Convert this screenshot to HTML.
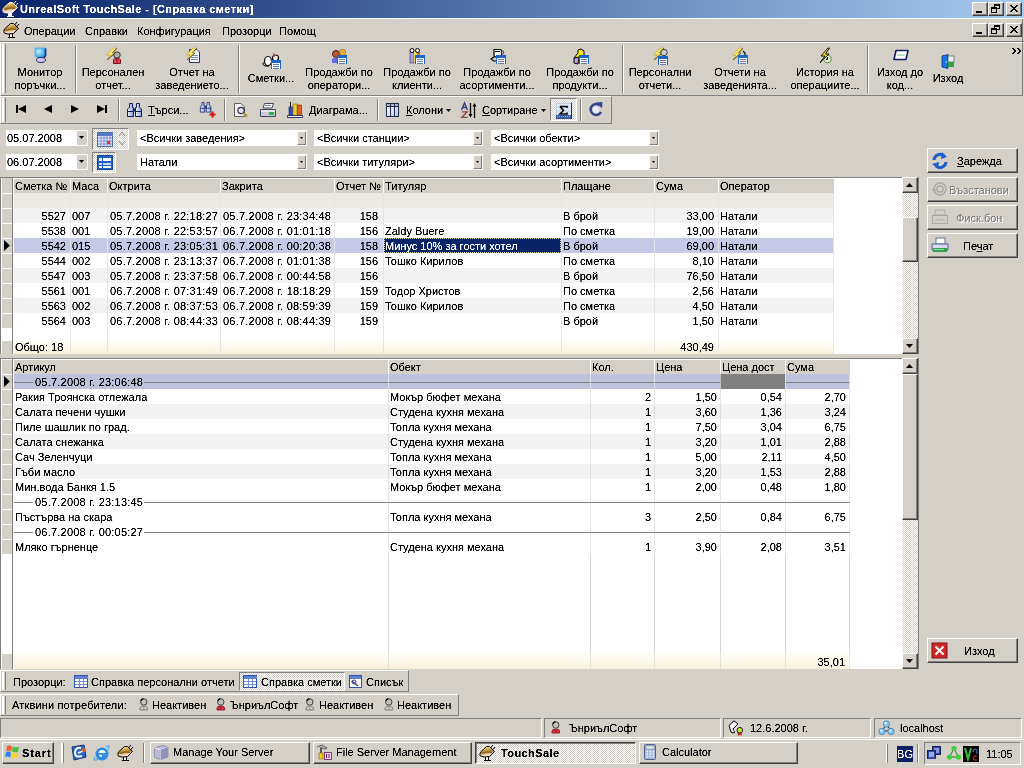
<!DOCTYPE html>
<html><head><meta charset="utf-8">
<style>
*{margin:0;padding:0;box-sizing:border-box}
html,body{width:1024px;height:768px;overflow:hidden;background:#D4D0C8;font-family:"Liberation Sans",sans-serif;font-size:11px;color:#000;position:relative}
.a{position:absolute}
svg.a{overflow:visible}
.t{position:absolute;white-space:nowrap;line-height:13px;filter:url(#cr)}

</style></head><body>
<svg width="0" height="0" style="position:absolute"><filter id="cr" color-interpolation-filters="sRGB"><feComponentTransfer><feFuncA type="linear" slope="2" intercept="-0.3"/></feComponentTransfer></filter></svg>
<div class="a" style="left:0px;top:0px;width:1024px;height:18px;background:linear-gradient(to right,#0A246A,#A6CAF0)"></div>
<svg class="a" style="left:2px;top:1px" width="17" height="17" viewBox="0 0 17 17"><defs><linearGradient id="ag1" x1="0" y1="0" x2="0.25" y2="1"><stop offset="0" stop-color="#FFF8C8"/><stop offset="0.35" stop-color="#D8B050"/><stop offset="0.6" stop-color="#A07828"/><stop offset="0.8" stop-color="#F0C8A0"/><stop offset="1" stop-color="#FFF0F0"/></linearGradient></defs><path d="M6 11.5 H10 V15 H6 Z" fill="#FFF4F0"/><path d="M1.5 7 L7.5 1.5 L10.5 1.5 L15.5 6.5 L10.5 11.5 L5 12 Q0 11.5 0.8 9.5 Z" fill="url(#ag1)" stroke="#F0F0F0" stroke-width="1"/><path d="M3 8.5 Q8 6 13 7.5" stroke="#806018" stroke-width="1" fill="none"/><path d="M11.5 3 L14 0 M13.5 5 L16 2" stroke="#F0F0F0" stroke-width="1"/><path d="M6.5 12 V15 M9.5 12 V15 M5 15.5 H12" stroke="#F0F0F0" stroke-width="1"/></svg>
<div class="t" style="left:20px;top:3px;color:#fff;font-weight:bold;font-size:11px;letter-spacing:0.42px">UnrealSoft TouchSale - [Справка сметки]</div>
<div class="a" style="left:972px;top:2px;width:16px;height:14px;background:#D4D0C8;border-top:1px solid #fff;border-left:1px solid #fff;border-right:1px solid #404040;border-bottom:1px solid #404040;box-shadow:inset -1px -1px 0 #808080"></div>
<div class="a" style="left:988px;top:2px;width:16px;height:14px;background:#D4D0C8;border-top:1px solid #fff;border-left:1px solid #fff;border-right:1px solid #404040;border-bottom:1px solid #404040;box-shadow:inset -1px -1px 0 #808080"></div>
<div class="a" style="left:1006px;top:2px;width:16px;height:14px;background:#D4D0C8;border-top:1px solid #fff;border-left:1px solid #fff;border-right:1px solid #404040;border-bottom:1px solid #404040;box-shadow:inset -1px -1px 0 #808080"></div>
<div class="a" style="left:976px;top:11px;width:6px;height:2px;background:#000"></div>
<svg class="a" style="left:988px;top:2px" width="16" height="14"><rect x="6.5" y="2.5" width="5" height="4" fill="none" stroke="#000"/><rect x="6" y="2" width="6" height="2" fill="#000"/><rect x="3.5" y="5.5" width="5" height="5" fill="#D4D0C8" stroke="#000"/><rect x="3" y="5" width="6" height="2" fill="#000"/></svg>
<svg class="a" style="left:1006px;top:2px" width="16" height="14" shape-rendering="crispEdges"><path d="M4 3h2v1h-2zM10 3h2v1h-2zM5 4h2v1h-2zM9 4h2v1h-2zM6 5h4v1h-4zM7 6h2v1h-2zM6 7h4v1h-4zM5 8h2v1h-2zM9 8h2v1h-2zM4 9h2v1h-2zM10 9h2v1h-2z" fill="#000"/></svg>
<div class="a" style="left:0px;top:18px;width:1024px;height:1px;background:#fff"></div>
<svg class="a" style="left:3px;top:22px" width="17" height="17" viewBox="0 0 17 17"><defs><linearGradient id="ag2" x1="0" y1="0" x2="0.25" y2="1"><stop offset="0" stop-color="#FFF8C8"/><stop offset="0.35" stop-color="#D8B050"/><stop offset="0.6" stop-color="#A07828"/><stop offset="0.8" stop-color="#F0C8A0"/><stop offset="1" stop-color="#FFF0F0"/></linearGradient></defs><path d="M6 11.5 H10 V15 H6 Z" fill="#FFF4F0"/><path d="M1.5 7 L7.5 1.5 L10.5 1.5 L15.5 6.5 L10.5 11.5 L5 12 Q0 11.5 0.8 9.5 Z" fill="url(#ag2)" stroke="#000" stroke-width="1"/><path d="M3 8.5 Q8 6 13 7.5" stroke="#806018" stroke-width="1" fill="none"/><path d="M11.5 3 L14 0 M13.5 5 L16 2" stroke="#000" stroke-width="1"/><path d="M6.5 12 V15 M9.5 12 V15 M5 15.5 H12" stroke="#000" stroke-width="1"/></svg>
<div class="t" style="left:24px;top:25px;">Операции</div>
<div class="t" style="left:85px;top:25px;">Справки</div>
<div class="t" style="left:137px;top:25px;">Конфигурация</div>
<div class="t" style="left:222px;top:25px;">Прозорци</div>
<div class="t" style="left:279px;top:25px;">Помощ</div>
<div class="a" style="left:972px;top:23px;width:16px;height:14px;background:#D4D0C8;border-top:1px solid #fff;border-left:1px solid #fff;border-right:1px solid #404040;border-bottom:1px solid #404040;box-shadow:inset -1px -1px 0 #808080"></div>
<div class="a" style="left:988px;top:23px;width:16px;height:14px;background:#D4D0C8;border-top:1px solid #fff;border-left:1px solid #fff;border-right:1px solid #404040;border-bottom:1px solid #404040;box-shadow:inset -1px -1px 0 #808080"></div>
<div class="a" style="left:1006px;top:23px;width:16px;height:14px;background:#D4D0C8;border-top:1px solid #fff;border-left:1px solid #fff;border-right:1px solid #404040;border-bottom:1px solid #404040;box-shadow:inset -1px -1px 0 #808080"></div>
<div class="a" style="left:976px;top:32px;width:6px;height:2px;background:#000"></div>
<svg class="a" style="left:988px;top:23px" width="16" height="14"><rect x="6.5" y="2.5" width="5" height="4" fill="none" stroke="#000"/><rect x="6" y="2" width="6" height="2" fill="#000"/><rect x="3.5" y="5.5" width="5" height="5" fill="#D4D0C8" stroke="#000"/><rect x="3" y="5" width="6" height="2" fill="#000"/></svg>
<svg class="a" style="left:1006px;top:23px" width="16" height="14" shape-rendering="crispEdges"><path d="M4 3h2v1h-2zM10 3h2v1h-2zM5 4h2v1h-2zM9 4h2v1h-2zM6 5h4v1h-4zM7 6h2v1h-2zM6 7h4v1h-4zM5 8h2v1h-2zM9 8h2v1h-2zM4 9h2v1h-2zM10 9h2v1h-2z" fill="#000"/></svg>
<div class="a" style="left:0px;top:41px;width:1024px;height:1px;background:#808080"></div>
<div class="a" style="left:0px;top:42px;width:1024px;height:1px;background:#fff"></div>
<div class="a" style="left:0px;top:42px;width:1023px;height:54px;background:#D4D0C8;border-top:1px solid #fff;border-left:1px solid #fff;border-right:1px solid #808080;border-bottom:1px solid #808080"></div>
<div class="a" style="left:2px;top:44px;width:2px;height:49px;background:#fff"></div>
<div class="a" style="left:5px;top:44px;width:1px;height:49px;background:#808080"></div>
<div class="a" style="left:75px;top:45px;width:1px;height:48px;background:#808080"></div>
<div class="a" style="left:76px;top:45px;width:1px;height:48px;background:#fff"></div>
<div class="a" style="left:238px;top:45px;width:1px;height:48px;background:#808080"></div>
<div class="a" style="left:239px;top:45px;width:1px;height:48px;background:#fff"></div>
<div class="a" style="left:622px;top:45px;width:1px;height:48px;background:#808080"></div>
<div class="a" style="left:623px;top:45px;width:1px;height:48px;background:#fff"></div>
<div class="a" style="left:867px;top:45px;width:1px;height:48px;background:#808080"></div>
<div class="a" style="left:868px;top:45px;width:1px;height:48px;background:#fff"></div>
<svg class="a" style="left:34px;top:47px" width="14" height="17" viewBox="0 0 14 17"><defs><radialGradient id="mg" cx="0.35" cy="0.35" r="0.7"><stop offset="0" stop-color="#B8F4FF"/><stop offset="1" stop-color="#2890E0"/></radialGradient></defs><path d="M1 1 H12 V8 Q12 11 7 11 Q1 11 1 8 Z" fill="url(#mg)" stroke="#5AA8E8" stroke-width=".8"/><path d="M11.5 1.5 V8.5 Q11 10.5 9 11" stroke="#203880" stroke-width="1.6" fill="none"/><ellipse cx="7" cy="13" rx="4.5" ry="2.5" fill="#D0C8F8" stroke="#302860" stroke-width="1"/></svg>
<div class="t" style="left:-20px;width:120px;text-align:center;top:66px;">Монитор</div>
<div class="t" style="left:-20px;width:120px;text-align:center;top:79px;">поръчки...</div>
<svg class="a" style="left:105px;top:47px" width="18" height="17" viewBox="0 0 18 17"><g transform="translate(1,1)"><path d="M7 0 L11 0 L6.5 5 L9 5 L1 12 L4 7 L0.5 7 Z" fill="#F8E470" stroke="#C0A030" stroke-width="0.6" stroke-linejoin="round"/><path d="M11 0 L6.5 5 M9 5 L1 12" stroke="#5A5020" stroke-width="1"/></g><circle cx="12" cy="8" r="3.2" fill="#B0B0B0" stroke="#303030" stroke-width="1"/><path d="M8.5 16.5 V13 Q8.5 11.5 12 11.5 Q15.5 11.5 15.5 13 V16.5 Z" fill="#E04858" stroke="#801020" stroke-width="1"/><path d="M12 11.5 V16" stroke="#801020"/></svg>
<div class="t" style="left:53px;width:120px;text-align:center;top:66px;">Персонален</div>
<div class="t" style="left:53px;width:120px;text-align:center;top:79px;">отчет...</div>
<svg class="a" style="left:185px;top:47px" width="17" height="17" viewBox="0 0 17 17"><path d="M4.5 2.5 H12 L14.5 5 V15.5 H4.5 Z" fill="#F0F4FF" stroke="#303060" stroke-width="1"/><path d="M6 8.5 H13 M6 10.5 H13 M6 12.5 H13" stroke="#8090C0"/><g transform="translate(1,1)"><path d="M7 0 L11 0 L6.5 5 L9 5 L1 12 L4 7 L0.5 7 Z" fill="#F8E470" stroke="#C0A030" stroke-width="0.6" stroke-linejoin="round"/><path d="M11 0 L6.5 5 M9 5 L1 12" stroke="#5A5020" stroke-width="1"/></g></svg>
<div class="t" style="left:132px;width:120px;text-align:center;top:66px;">Отчет на</div>
<div class="t" style="left:132px;width:120px;text-align:center;top:79px;">заведението...</div>
<svg class="a" style="left:262px;top:52px" width="20" height="18" viewBox="0 0 20 18"><ellipse cx="6" cy="9" rx="3.5" ry="4.5" fill="#fff" stroke="#000" stroke-width="1.2"/><path d="M2.5 10 L0.5 12 L3 14 H7" stroke="#000" fill="none"/><circle cx="13.5" cy="6" r="3" fill="#fff" stroke="#000" stroke-width="1.2"/><path d="M11.5 1 L12.5 5" stroke="#E04040"/><rect x="9" y="8" width="10" height="9" fill="#1C64C8"/><rect x="10" y="11" width="8" height="6" fill="#F4FAFF"/><path d="M11 12.5h6M11 14.5h6M11 16.5h6" stroke="#6878A0" stroke-width="1"/></svg>
<div class="t" style="left:211px;width:120px;text-align:center;top:72px;">Сметки...</div>
<svg class="a" style="left:331px;top:48px" width="18" height="17" viewBox="0 0 18 17"><circle cx="5" cy="6" r="3.5" fill="#C05828" stroke="#401810" stroke-width="1"/><circle cx="11.5" cy="4.5" r="3.2" fill="#E8B040" stroke="#906010" stroke-width=".6"/><path d="M1 15 V12 Q1 9.5 5 9.5 Q9 9.5 9 12 V15 Z" fill="#6868E8"/><rect x="6" y="7" width="10" height="9" fill="#1C64C8"/><rect x="7" y="10" width="8" height="6" fill="#F4FAFF"/><path d="M8 11.5h6M8 13.5h6M8 15.5h6" stroke="#6878A0" stroke-width="1"/></svg>
<div class="t" style="left:279px;width:120px;text-align:center;top:66px;">Продажби по</div>
<div class="t" style="left:279px;width:120px;text-align:center;top:79px;">оператори...</div>
<svg class="a" style="left:409px;top:48px" width="18" height="17" viewBox="0 0 18 17"><rect x="1" y="4" width="4" height="11" fill="#A8A0E8" stroke="#303060" stroke-width=".6"/><rect x="5" y="4" width="4" height="10" fill="#F0E048"/><rect x="8" y="4" width="3" height="5" fill="#E06060"/><circle cx="3" cy="2.5" r="2" fill="#fff" stroke="#000"/><circle cx="8.5" cy="2.5" r="2" fill="#fff" stroke="#000"/><rect x="6" y="7" width="10" height="9" fill="#1C64C8"/><rect x="7" y="10" width="8" height="6" fill="#F4FAFF"/><path d="M8 11.5h6M8 13.5h6M8 15.5h6" stroke="#6878A0" stroke-width="1"/></svg>
<div class="t" style="left:357px;width:120px;text-align:center;top:66px;">Продажби по</div>
<div class="t" style="left:357px;width:120px;text-align:center;top:79px;">клиенти...</div>
<svg class="a" style="left:490px;top:48px" width="18" height="17" viewBox="0 0 18 17"><path d="M4 1.5 H10 Q11.5 1.5 11.5 3 V7 Q11.5 9 9 9 H6 Q4 9 4 7 Z" fill="#fff" stroke="#000" stroke-width="1.2"/><path d="M5 3.5 H10" stroke="#000"/><ellipse cx="12.5" cy="4.5" rx="1.2" ry="1.5" fill="#F8D0C0" stroke="#000" stroke-width=".8"/><path d="M4 9 L1 11 L4 13 H7" stroke="#000" stroke-width="1.2" fill="none"/><rect x="6" y="7" width="10" height="9" fill="#1C64C8"/><rect x="7" y="10" width="8" height="6" fill="#F4FAFF"/><path d="M8 11.5h6M8 13.5h6M8 15.5h6" stroke="#6878A0" stroke-width="1"/></svg>
<div class="t" style="left:437px;width:120px;text-align:center;top:66px;">Продажби по</div>
<div class="t" style="left:437px;width:120px;text-align:center;top:79px;">асортименти...</div>
<svg class="a" style="left:572px;top:48px" width="18" height="17" viewBox="0 0 18 17"><path d="M2 10 L6 5 V2 L9 1 L12 3 V8 L6 10" fill="#F8E818" stroke="#000" stroke-width="1"/><path d="M2 10 V15 L6 16 L7 9 Z" fill="#B0A0F0" stroke="#000" stroke-width="1"/><rect x="7" y="7" width="10" height="9" fill="#1C64C8"/><rect x="8" y="10" width="8" height="6" fill="#F4FAFF"/><path d="M9 11.5h6M9 13.5h6M9 15.5h6" stroke="#6878A0" stroke-width="1"/></svg>
<div class="t" style="left:520px;width:120px;text-align:center;top:66px;">Продажби по</div>
<div class="t" style="left:520px;width:120px;text-align:center;top:79px;">продукти...</div>
<svg class="a" style="left:652px;top:48px" width="18" height="17" viewBox="0 0 18 17"><g transform="translate(1,0)"><path d="M7 0 L11 0 L6.5 5 L9 5 L1 12 L4 7 L0.5 7 Z" fill="#F8E470" stroke="#C0A030" stroke-width="0.6" stroke-linejoin="round"/><path d="M11 0 L6.5 5 M9 5 L1 12" stroke="#5A5020" stroke-width="1"/></g><circle cx="12" cy="4.5" r="3.2" fill="#C8D0C8" stroke="#404040" stroke-width="1"/><rect x="6" y="8" width="10" height="9" fill="#1C64C8"/><rect x="7" y="11" width="8" height="6" fill="#F4FAFF"/><path d="M8 12.5h6M8 14.5h6M8 16.5h6" stroke="#6878A0" stroke-width="1"/></svg>
<div class="t" style="left:600px;width:120px;text-align:center;top:66px;">Персонални</div>
<div class="t" style="left:600px;width:120px;text-align:center;top:79px;">отчети...</div>
<svg class="a" style="left:732px;top:48px" width="18" height="17" viewBox="0 0 18 17"><g transform="translate(0,0)"><path d="M7 0 L11 0 L6.5 5 L9 5 L1 12 L4 7 L0.5 7 Z" fill="#F8E470" stroke="#C0A030" stroke-width="0.6" stroke-linejoin="round"/><path d="M11 0 L6.5 5 M9 5 L1 12" stroke="#5A5020" stroke-width="1"/></g><path d="M11 3 L13 5 V7" stroke="#202040" stroke-width="1.5" fill="none"/><rect x="6" y="7" width="10" height="9" fill="#1C64C8"/><rect x="7" y="10" width="8" height="6" fill="#F4FAFF"/><path d="M8 11.5h6M8 13.5h6M8 15.5h6" stroke="#6878A0" stroke-width="1"/></svg>
<div class="t" style="left:680px;width:120px;text-align:center;top:66px;">Отчети на</div>
<div class="t" style="left:680px;width:120px;text-align:center;top:79px;">заведенията...</div>
<svg class="a" style="left:817px;top:47px" width="16" height="17" viewBox="0 0 16 17"><circle cx="10.5" cy="12" r="3.8" fill="#E8F4E0" stroke="#609040" stroke-width="1"/><path d="M10.5 10 V12.5 H9" stroke="#000"/><path d="M11 1 L4 9 H8 L3 15.5 L12 7 H8.5 L12.5 1 Z" fill="#F8E030" stroke="#000" stroke-width=".9" stroke-linejoin="round"/></svg>
<div class="t" style="left:765px;width:120px;text-align:center;top:66px;">История на</div>
<div class="t" style="left:765px;width:120px;text-align:center;top:79px;">операциите...</div>
<svg class="a" style="left:892px;top:49px" width="18" height="13" viewBox="0 0 18 13"><path d="M4 1.5 H16 L14 10.5 H2 Z" fill="#fff" stroke="#102060" stroke-width="1.6" stroke-linejoin="round"/><path d="M5 5 H13 L12.5 7 H4.5 Z" fill="#B8E0C8"/></svg>
<div class="t" style="left:840px;width:120px;text-align:center;top:66px;">Изход до</div>
<div class="t" style="left:840px;width:120px;text-align:center;top:79px;">код...</div>
<svg class="a" style="left:941px;top:54px" width="15" height="15" viewBox="0 0 15 15"><path d="M1 2 L7 0.5 V14.5 L1 13 Z" fill="#1878E8" stroke="#102870" stroke-width=".8"/><rect x="7" y="2" width="6" height="6" fill="#E8F0F8" stroke="#305030" stroke-width=".6"/><rect x="7" y="8" width="6" height="5" fill="#30A040"/><circle cx="5.5" cy="8" r=".8" fill="#A0E0FF"/></svg>
<div class="t" style="left:888px;width:120px;text-align:center;top:72px;">Изход</div>
<svg class="a" style="left:1011px;top:48px" width="12" height="8" viewBox="0 0 12 8"><path d="M1 0 L4 3 L1 6 M2 0 L5 3 L2 6 M6 0 L9 3 L6 6 M7 0 L10 3 L7 6" stroke="#000" fill="none"/></svg>
<div class="a" style="left:1022px;top:19px;width:1px;height:77px;background:#808080"></div>
<div class="a" style="left:0px;top:96px;width:612px;height:28px;background:#D4D0C8;border-top:1px solid #fff;border-left:1px solid #fff;border-right:1px solid #808080;border-bottom:1px solid #808080"></div>
<div class="a" style="left:2px;top:98px;width:2px;height:24px;background:#fff"></div>
<div class="a" style="left:5px;top:98px;width:1px;height:24px;background:#808080"></div>
<svg class="a" style="left:15px;top:105px" width="12" height="9" viewBox="0 0 12 9"><rect x="1" y="0" width="2" height="8" fill="#000"/><path d="M3 4 L11 0 V8 Z" fill="#000"/></svg>
<svg class="a" style="left:43px;top:105px" width="10" height="9" viewBox="0 0 10 9"><path d="M1 4 L9 0 V8 Z" fill="#000"/></svg>
<svg class="a" style="left:70px;top:105px" width="10" height="9" viewBox="0 0 10 9"><path d="M1 0 L9 4 L1 8 Z" fill="#000"/></svg>
<svg class="a" style="left:96px;top:105px" width="12" height="9" viewBox="0 0 12 9"><path d="M1 0 L9 4 L1 8 Z" fill="#000"/><rect x="9" y="0" width="2" height="8" fill="#000"/></svg>
<div class="a" style="left:118px;top:99px;width:1px;height:22px;background:#808080"></div>
<div class="a" style="left:119px;top:99px;width:1px;height:22px;background:#fff"></div>
<div class="a" style="left:224px;top:99px;width:1px;height:22px;background:#808080"></div>
<div class="a" style="left:225px;top:99px;width:1px;height:22px;background:#fff"></div>
<div class="a" style="left:377px;top:99px;width:1px;height:22px;background:#808080"></div>
<div class="a" style="left:378px;top:99px;width:1px;height:22px;background:#fff"></div>
<div class="a" style="left:580px;top:99px;width:1px;height:22px;background:#808080"></div>
<div class="a" style="left:581px;top:99px;width:1px;height:22px;background:#fff"></div>
<svg class="a" style="left:127px;top:103px" width="16" height="14" viewBox="0 0 16 14"><g transform="scale(1.0)"><defs><linearGradient id="bg127" x1="0" y1="0" x2="1" y2="0"><stop offset="0" stop-color="#F0F4FF"/><stop offset="1" stop-color="#8898D0"/></linearGradient></defs><path d="M2.5 0.5 H5.5 V4.5 H6.5 V13.5 H0.5 V6 L2.5 4.5 Z" fill="url(#bg127)" stroke="#102060"/><path d="M9.5 0.5 H12.5 V4.5 L14.5 6 V13.5 H8.5 V4.5 H9.5 Z" fill="url(#bg127)" stroke="#102060"/><rect x="6.5" y="5.5" width="2" height="3" fill="#102060"/><path d="M1 8.5 H6 M9 8.5 H14" stroke="#102060"/></g></svg>
<div class="t" style="left:148px;top:104px;"><u>Т</u>ърси...</div>
<svg class="a" style="left:200px;top:102px" width="16" height="14" viewBox="0 0 16 14"><g transform="scale(0.75)"><defs><linearGradient id="bg200" x1="0" y1="0" x2="1" y2="0"><stop offset="0" stop-color="#F0F4FF"/><stop offset="1" stop-color="#8898D0"/></linearGradient></defs><path d="M2.5 0.5 H5.5 V4.5 H6.5 V13.5 H0.5 V6 L2.5 4.5 Z" fill="url(#bg200)" stroke="#102060"/><path d="M9.5 0.5 H12.5 V4.5 L14.5 6 V13.5 H8.5 V4.5 H9.5 Z" fill="url(#bg200)" stroke="#102060"/><rect x="6.5" y="5.5" width="2" height="3" fill="#102060"/><path d="M1 8.5 H6 M9 8.5 H14" stroke="#102060"/></g></svg>
<svg class="a" style="left:209px;top:111px" width="8" height="8" viewBox="0 0 8 8"><path d="M3.5 0.5 V6.5 M0.5 3.5 H6.5" stroke="#E01010" stroke-width="2.2"/></svg>
<svg class="a" style="left:234px;top:103px" width="15" height="15" viewBox="0 0 15 15"><path d="M0.5 0.5 H7 L10.5 4 V13.5 H0.5 Z" fill="#F4F4F4" stroke="#606060"/><circle cx="7" cy="7.5" r="3.2" fill="#DDE4F0" stroke="#303040" stroke-width="1.2"/><path d="M9.5 10 L13 13.5" stroke="#B89038" stroke-width="2.4"/></svg>
<svg class="a" style="left:260px;top:103px" width="16" height="15" viewBox="0 0 16 15"><path d="M4.5 0.5 H13.5 L12 5 H3 Z" fill="#F8F8FF" stroke="#404860"/><path d="M5 2.5 H11" stroke="#8890B0"/><path d="M0.5 6.5 H15.5 V13.5 H0.5 Z" fill="#E8E8F0" stroke="#404860"/><rect x="1" y="9" width="14" height="4" fill="#C8CCD8"/><rect x="9" y="9" width="5" height="3" fill="#30B040"/></svg>
<svg class="a" style="left:287px;top:102px" width="16" height="16" viewBox="0 0 16 16"><path d="M3.5 0 V5" stroke="#000"/><rect x="2" y="5" width="3.5" height="9" fill="#2850C8" stroke="#102060" stroke-width=".6"/><rect x="6" y="2" width="4" height="12" fill="#E8D030" stroke="#806010" stroke-width=".6"/><rect x="10.5" y="3" width="4" height="11" fill="#E06020" stroke="#802010" stroke-width=".6"/><path d="M0.5 13.5 H15.5 V15.5 H0.5 Z" fill="#fff" stroke="#303060"/></svg>
<div class="t" style="left:309px;top:104px;">Диаграма...</div>
<svg class="a" style="left:386px;top:103px" width="14" height="15" viewBox="0 0 14 15"><defs><linearGradient id="colg" x1="0" y1="0" x2="1" y2="1"><stop offset="0" stop-color="#fff"/><stop offset="1" stop-color="#B8C8F0"/></linearGradient></defs><rect x="0.5" y="0.5" width="12" height="13" fill="url(#colg)" stroke="#202848"/><rect x="1" y="1" width="11" height="2" fill="#B0B8D8"/><path d="M1 3.5 H12 M4.5 1 V13 M8.5 1 V13" stroke="#202848"/></svg>
<div class="t" style="left:406px;top:104px;"><u>К</u>олони</div>
<svg class="a" style="left:446px;top:109px" width="6" height="4" viewBox="0 0 6 4"><path d="M0 0 H5 L2.5 3 Z" fill="#000"/></svg>
<svg class="a" style="left:461px;top:102px" width="17" height="17" viewBox="0 0 17 17"><path d="M0.5 8 L3.5 1 L6.5 8 M1.8 5.5 H5.2" stroke="#303880" stroke-width="1.3" fill="none"/><path d="M0.8 9.8 H6.2 L0.8 15.4 H6.6" stroke="#904040" stroke-width="1.3" fill="none"/><path d="M9.5 1 V14" stroke="#000" stroke-width="1.3"/><path d="M7.5 12 L9.5 15.5 L11.5 12 Z" fill="#000"/><path d="M13.5 3 V16" stroke="#000" stroke-width="1.3"/><path d="M11.5 4.5 L13.5 1 L15.5 4.5 Z" fill="#000"/></svg>
<div class="t" style="left:482px;top:104px;"><u>С</u>ортиране</div>
<svg class="a" style="left:541px;top:109px" width="6" height="4" viewBox="0 0 6 4"><path d="M0 0 H5 L2.5 3 Z" fill="#000"/></svg>
<div class="a" style="left:550px;top:98px;width:27px;height:23px;border-top:1px solid #808080;border-left:1px solid #808080;border-right:1px solid #fff;border-bottom:1px solid #fff;background-color:#fff;background-image:linear-gradient(45deg,#D4D0C8 25%,transparent 25%,transparent 75%,#D4D0C8 75%),linear-gradient(45deg,#D4D0C8 25%,transparent 25%,transparent 75%,#D4D0C8 75%);background-size:2px 2px;background-position:0 0,1px 1px"></div>
<svg class="a" style="left:556px;top:103px" width="17" height="16" viewBox="0 0 17 16"><rect x="0.5" y="0.5" width="15" height="15" fill="#E4ECFA" stroke="#C0CCE8"/><path d="M4 1 V12 M8 1 V12 M12 1 V12 M1 4 H15 M1 8 H15" stroke="#C8D4EC"/><rect x="0" y="12" width="16" height="4" fill="#3A5AA8"/><path d="M1 13.5 H15" stroke="#A0B0E0" stroke-dasharray="1 1"/><path d="M15.5 0 V16" stroke="#203060"/><path d="M4 3.5 H11 V5 M4 3.5 L7.5 7.5 L4 11 H11 V9.5" stroke="#000" stroke-width="1.6" fill="none"/></svg>
<svg class="a" style="left:588px;top:101px" width="16" height="17" viewBox="0 0 16 17"><path d="M12 4.5 A5.5 5.5 0 1 0 13 11" stroke="#34448E" stroke-width="2.6" fill="none"/><circle cx="8" cy="9" r="3.2" fill="#E8ECF8"/><path d="M8.5 1.5 L14.5 1 L14 7.5 Z" fill="#34448E"/></svg>
<div class="a" style="left:6px;top:130px;width:82px;height:16px;background:#fff"></div>
<div class="t" style="left:7px;top:132px;">05.07.2008</div>
<div class="a" style="left:77px;top:131px;width:10px;height:14px;background:#D4D0C8"></div>
<svg class="a" style="left:79px;top:136px" width="6" height="4" viewBox="0 0 6 4"><path d="M0 0 H5 L2.5 3 Z" fill="#000"/></svg>
<div class="a" style="left:6px;top:154px;width:82px;height:16px;background:#fff"></div>
<div class="t" style="left:7px;top:156px;">06.07.2008</div>
<div class="a" style="left:77px;top:155px;width:10px;height:14px;background:#D4D0C8"></div>
<svg class="a" style="left:79px;top:160px" width="6" height="4" viewBox="0 0 6 4"><path d="M0 0 H5 L2.5 3 Z" fill="#000"/></svg>
<div class="a" style="left:137px;top:130px;width:170px;height:16px;background:#fff"></div>
<div class="t" style="left:140px;top:132px;">&lt;Всички заведения&gt;</div>
<div class="a" style="left:297px;top:131px;width:9px;height:14px;background:#D4D0C8;border-top:1px solid #fff;border-left:1px solid #fff;border-right:1px solid #808080;border-bottom:1px solid #808080"></div>
<svg class="a" style="left:300px;top:137px" width="4" height="3" viewBox="0 0 4 3"><path d="M0 0 H3 L1.5 2 Z" fill="#000"/></svg>
<div class="a" style="left:137px;top:154px;width:170px;height:16px;background:#fff"></div>
<div class="t" style="left:140px;top:156px;">Натали</div>
<div class="a" style="left:297px;top:155px;width:9px;height:14px;background:#D4D0C8;border-top:1px solid #fff;border-left:1px solid #fff;border-right:1px solid #808080;border-bottom:1px solid #808080"></div>
<svg class="a" style="left:300px;top:161px" width="4" height="3" viewBox="0 0 4 3"><path d="M0 0 H3 L1.5 2 Z" fill="#000"/></svg>
<div class="a" style="left:314px;top:130px;width:169px;height:16px;background:#fff"></div>
<div class="t" style="left:317px;top:132px;">&lt;Всички станции&gt;</div>
<div class="a" style="left:473px;top:131px;width:9px;height:14px;background:#D4D0C8;border-top:1px solid #fff;border-left:1px solid #fff;border-right:1px solid #808080;border-bottom:1px solid #808080"></div>
<svg class="a" style="left:476px;top:137px" width="4" height="3" viewBox="0 0 4 3"><path d="M0 0 H3 L1.5 2 Z" fill="#000"/></svg>
<div class="a" style="left:314px;top:154px;width:169px;height:16px;background:#fff"></div>
<div class="t" style="left:317px;top:156px;">&lt;Всички титуляри&gt;</div>
<div class="a" style="left:473px;top:155px;width:9px;height:14px;background:#D4D0C8;border-top:1px solid #fff;border-left:1px solid #fff;border-right:1px solid #808080;border-bottom:1px solid #808080"></div>
<svg class="a" style="left:476px;top:161px" width="4" height="3" viewBox="0 0 4 3"><path d="M0 0 H3 L1.5 2 Z" fill="#000"/></svg>
<div class="a" style="left:491px;top:130px;width:168px;height:16px;background:#fff"></div>
<div class="t" style="left:494px;top:132px;">&lt;Всички обекти&gt;</div>
<div class="a" style="left:649px;top:131px;width:9px;height:14px;background:#D4D0C8;border-top:1px solid #fff;border-left:1px solid #fff;border-right:1px solid #808080;border-bottom:1px solid #808080"></div>
<svg class="a" style="left:652px;top:137px" width="4" height="3" viewBox="0 0 4 3"><path d="M0 0 H3 L1.5 2 Z" fill="#000"/></svg>
<div class="a" style="left:491px;top:154px;width:168px;height:16px;background:#fff"></div>
<div class="t" style="left:494px;top:156px;">&lt;Всички асортименти&gt;</div>
<div class="a" style="left:649px;top:155px;width:9px;height:14px;background:#D4D0C8;border-top:1px solid #fff;border-left:1px solid #fff;border-right:1px solid #808080;border-bottom:1px solid #808080"></div>
<svg class="a" style="left:652px;top:161px" width="4" height="3" viewBox="0 0 4 3"><path d="M0 0 H3 L1.5 2 Z" fill="#000"/></svg>
<div class="a" style="left:92px;top:128px;width:37px;height:22px;border-top:1px solid #808080;border-left:1px solid #808080;border-right:1px solid #fff;border-bottom:1px solid #fff;background-color:#fff;background-image:linear-gradient(45deg,#D4D0C8 25%,transparent 25%,transparent 75%,#D4D0C8 75%),linear-gradient(45deg,#D4D0C8 25%,transparent 25%,transparent 75%,#D4D0C8 75%);background-size:2px 2px;background-position:0 0,1px 1px"></div>
<svg class="a" style="left:97px;top:131px" width="17" height="16" viewBox="0 0 17 16"><rect x="0.5" y="1.5" width="15" height="14" fill="#E8ECFF" stroke="#5070B0"/><rect x="1" y="2" width="15" height="3" fill="#5878C8"/><path d="M1 7 H15 M1 10 H15 M1 13 H15 M4 5 V15 M7 5 V15 M10 5 V15 M13 5 V15" stroke="#8090D0"/><rect x="10" y="10" width="3" height="3" fill="#E03030"/></svg>
<svg class="a" style="left:118px;top:131px" width="8" height="16" viewBox="0 0 8 16"><path d="M1 5 L4 1 L7 5" stroke="#909090" fill="none"/><path d="M1 10 L4 14 L7 10" stroke="#909090" fill="none"/></svg>
<div class="a" style="left:92px;top:152px;width:24px;height:21px;border-top:1px solid #808080;border-left:1px solid #808080;border-right:1px solid #fff;border-bottom:1px solid #fff;background-color:#fff;background-image:linear-gradient(45deg,#D4D0C8 25%,transparent 25%,transparent 75%,#D4D0C8 75%),linear-gradient(45deg,#D4D0C8 25%,transparent 25%,transparent 75%,#D4D0C8 75%);background-size:2px 2px;background-position:0 0,1px 1px"></div>
<svg class="a" style="left:97px;top:155px" width="16" height="15" viewBox="0 0 16 15"><rect x="0.5" y="0.5" width="15" height="14" fill="#2060C0" stroke="#1848A0"/><rect x="2" y="3" width="3" height="3" fill="#fff"/><rect x="6" y="3" width="8" height="3" fill="#fff"/><rect x="2" y="8" width="3" height="2" fill="#C0D8F8"/><rect x="6" y="8" width="8" height="2" fill="#C0D8F8"/><rect x="2" y="11" width="3" height="2" fill="#fff"/><rect x="6" y="11" width="8" height="2" fill="#fff"/></svg>
<div class="a" style="left:0px;top:177px;width:902px;height:177px;background:#fff;border-top:1px solid #808080;border-left:1px solid #808080"></div>
<div class="a" style="left:1px;top:178px;width:1px;height:176px;background:#fff"></div>
<div class="a" style="left:14px;top:193px;width:820px;height:15px;background:#ECE9E3"></div>
<div class="a" style="left:14px;top:208px;width:820px;height:15px;background:#F2F2F2"></div>
<div class="a" style="left:14px;top:223px;width:820px;height:15px;background:#FFFFFF"></div>
<div class="a" style="left:14px;top:238px;width:820px;height:15px;background:#C6C8E8"></div>
<div class="a" style="left:14px;top:253px;width:820px;height:15px;background:#FFFFFF"></div>
<div class="a" style="left:14px;top:268px;width:820px;height:15px;background:#F2F2F2"></div>
<div class="a" style="left:14px;top:283px;width:820px;height:15px;background:#FFFFFF"></div>
<div class="a" style="left:14px;top:298px;width:820px;height:15px;background:#F2F2F2"></div>
<div class="a" style="left:14px;top:313px;width:820px;height:15px;background:#FFFFFF"></div>
<div class="a" style="left:14px;top:340px;width:820px;height:14px;background:linear-gradient(#FFFEF8,#F8F0DC)"></div>
<div class="a" style="left:70px;top:193px;width:1px;height:161px;background:#E4E4E4"></div>
<div class="a" style="left:107px;top:193px;width:1px;height:161px;background:#E4E4E4"></div>
<div class="a" style="left:220px;top:193px;width:1px;height:161px;background:#E4E4E4"></div>
<div class="a" style="left:334px;top:193px;width:1px;height:161px;background:#E4E4E4"></div>
<div class="a" style="left:383px;top:193px;width:1px;height:161px;background:#E4E4E4"></div>
<div class="a" style="left:561px;top:193px;width:1px;height:161px;background:#E4E4E4"></div>
<div class="a" style="left:654px;top:193px;width:1px;height:161px;background:#E4E4E4"></div>
<div class="a" style="left:718px;top:193px;width:1px;height:161px;background:#E4E4E4"></div>
<div class="a" style="left:833px;top:193px;width:1px;height:161px;background:#E4E4E4"></div>
<div class="a" style="left:13px;top:178px;width:821px;height:15px;background:#fff"></div>
<div class="a" style="left:14px;top:179px;width:56px;height:14px;background:#D4D0C8"></div>
<div class="a" style="left:71px;top:179px;width:36px;height:14px;background:#D4D0C8"></div>
<div class="a" style="left:108px;top:179px;width:112px;height:14px;background:#D4D0C8"></div>
<div class="a" style="left:221px;top:179px;width:113px;height:14px;background:#D4D0C8"></div>
<div class="a" style="left:335px;top:179px;width:48px;height:14px;background:#D4D0C8"></div>
<div class="a" style="left:384px;top:179px;width:177px;height:14px;background:#D4D0C8"></div>
<div class="a" style="left:562px;top:179px;width:92px;height:14px;background:#D4D0C8"></div>
<div class="a" style="left:655px;top:179px;width:63px;height:14px;background:#D4D0C8"></div>
<div class="a" style="left:719px;top:179px;width:115px;height:14px;background:#D4D0C8"></div>
<div class="t" style="left:15px;top:180px;">Сметка №</div>
<div class="t" style="left:72px;top:180px;">Маса</div>
<div class="t" style="left:109px;top:180px;">Октрита</div>
<div class="t" style="left:222px;top:180px;">Закрита</div>
<div class="t" style="left:336px;top:180px;">Отчет №</div>
<div class="t" style="left:385px;top:180px;">Титуляр</div>
<div class="t" style="left:563px;top:180px;">Плащане</div>
<div class="t" style="left:656px;top:180px;">Сума</div>
<div class="t" style="left:720px;top:180px;">Оператор</div>
<div class="a" style="left:2px;top:178px;width:11px;height:176px;background:#D4D0C8"></div>
<div class="a" style="left:2px;top:328px;width:10px;height:12px;background:#fff"></div>
<div class="a" style="left:12px;top:178px;width:1px;height:176px;background:#808080"></div>
<div class="a" style="left:13px;top:178px;width:1px;height:176px;background:#fff"></div>
<div class="a" style="left:2px;top:193px;width:10px;height:1px;background:#fff"></div>
<div class="a" style="left:2px;top:208px;width:10px;height:1px;background:#fff"></div>
<div class="a" style="left:2px;top:223px;width:10px;height:1px;background:#fff"></div>
<div class="a" style="left:2px;top:238px;width:10px;height:1px;background:#fff"></div>
<div class="a" style="left:2px;top:253px;width:10px;height:1px;background:#fff"></div>
<div class="a" style="left:2px;top:268px;width:10px;height:1px;background:#fff"></div>
<div class="a" style="left:2px;top:283px;width:10px;height:1px;background:#fff"></div>
<div class="a" style="left:2px;top:298px;width:10px;height:1px;background:#fff"></div>
<div class="a" style="left:2px;top:313px;width:10px;height:1px;background:#fff"></div>
<div class="a" style="left:2px;top:340px;width:10px;height:1px;background:#fff"></div>
<svg class="a" style="left:4px;top:240px" width="7" height="12" viewBox="0 0 7 12"><path d="M0 0 L6 5.5 L0 11 Z" fill="#000"/></svg>
<div class="t" style="right:958px;top:210px;">5527</div>
<div class="t" style="left:72px;top:210px;">007</div>
<div class="t" style="left:110px;top:210px;letter-spacing:0.22px">05.7.2008 г. 22:18:27</div>
<div class="t" style="left:223px;top:210px;letter-spacing:0.22px">05.7.2008 г. 23:34:48</div>
<div class="t" style="right:646px;top:210px;">158</div>
<div class="t" style="left:563px;top:210px;">В брой</div>
<div class="t" style="right:310px;top:210px;">33,00</div>
<div class="t" style="left:720px;top:210px;">Натали</div>
<div class="t" style="right:958px;top:225px;">5538</div>
<div class="t" style="left:72px;top:225px;">001</div>
<div class="t" style="left:110px;top:225px;letter-spacing:0.22px">05.7.2008 г. 22:53:57</div>
<div class="t" style="left:223px;top:225px;letter-spacing:0.22px">06.7.2008 г. 01:01:18</div>
<div class="t" style="right:646px;top:225px;">156</div>
<div class="t" style="left:385px;top:225px;">Zaldy Buere</div>
<div class="t" style="left:563px;top:225px;">По сметка</div>
<div class="t" style="right:310px;top:225px;">19,00</div>
<div class="t" style="left:720px;top:225px;">Натали</div>
<div class="a" style="left:384px;top:238px;width:177px;height:15px;background:#0A246A;outline:1px dotted #E0E0A0;outline-offset:-1px"></div>
<div class="t" style="right:958px;top:240px;">5542</div>
<div class="t" style="left:72px;top:240px;">015</div>
<div class="t" style="left:110px;top:240px;letter-spacing:0.22px">05.7.2008 г. 23:05:31</div>
<div class="t" style="left:223px;top:240px;letter-spacing:0.22px">06.7.2008 г. 00:20:38</div>
<div class="t" style="right:646px;top:240px;">158</div>
<div class="t" style="left:385px;top:240px;color:#fff">Минус 10% за гости хотел</div>
<div class="t" style="left:563px;top:240px;">В брой</div>
<div class="t" style="right:310px;top:240px;">69,00</div>
<div class="t" style="left:720px;top:240px;">Натали</div>
<div class="t" style="right:958px;top:255px;">5544</div>
<div class="t" style="left:72px;top:255px;">002</div>
<div class="t" style="left:110px;top:255px;letter-spacing:0.22px">05.7.2008 г. 23:13:37</div>
<div class="t" style="left:223px;top:255px;letter-spacing:0.22px">06.7.2008 г. 01:01:38</div>
<div class="t" style="right:646px;top:255px;">156</div>
<div class="t" style="left:385px;top:255px;">Тошко Кирилов</div>
<div class="t" style="left:563px;top:255px;">По сметка</div>
<div class="t" style="right:310px;top:255px;">8,10</div>
<div class="t" style="left:720px;top:255px;">Натали</div>
<div class="t" style="right:958px;top:270px;">5547</div>
<div class="t" style="left:72px;top:270px;">003</div>
<div class="t" style="left:110px;top:270px;letter-spacing:0.22px">05.7.2008 г. 23:37:58</div>
<div class="t" style="left:223px;top:270px;letter-spacing:0.22px">06.7.2008 г. 00:44:58</div>
<div class="t" style="right:646px;top:270px;">156</div>
<div class="t" style="left:563px;top:270px;">В брой</div>
<div class="t" style="right:310px;top:270px;">76,50</div>
<div class="t" style="left:720px;top:270px;">Натали</div>
<div class="t" style="right:958px;top:285px;">5561</div>
<div class="t" style="left:72px;top:285px;">001</div>
<div class="t" style="left:110px;top:285px;letter-spacing:0.22px">06.7.2008 г. 07:31:49</div>
<div class="t" style="left:223px;top:285px;letter-spacing:0.22px">06.7.2008 г. 18:18:29</div>
<div class="t" style="right:646px;top:285px;">159</div>
<div class="t" style="left:385px;top:285px;">Тодор Христов</div>
<div class="t" style="left:563px;top:285px;">По сметка</div>
<div class="t" style="right:310px;top:285px;">2,56</div>
<div class="t" style="left:720px;top:285px;">Натали</div>
<div class="t" style="right:958px;top:300px;">5563</div>
<div class="t" style="left:72px;top:300px;">002</div>
<div class="t" style="left:110px;top:300px;letter-spacing:0.22px">06.7.2008 г. 08:37:53</div>
<div class="t" style="left:223px;top:300px;letter-spacing:0.22px">06.7.2008 г. 08:59:39</div>
<div class="t" style="right:646px;top:300px;">159</div>
<div class="t" style="left:385px;top:300px;">Тошко Кирилов</div>
<div class="t" style="left:563px;top:300px;">По сметка</div>
<div class="t" style="right:310px;top:300px;">4,50</div>
<div class="t" style="left:720px;top:300px;">Натали</div>
<div class="t" style="right:958px;top:315px;">5564</div>
<div class="t" style="left:72px;top:315px;">003</div>
<div class="t" style="left:110px;top:315px;letter-spacing:0.22px">06.7.2008 г. 08:44:33</div>
<div class="t" style="left:223px;top:315px;letter-spacing:0.22px">06.7.2008 г. 08:44:39</div>
<div class="t" style="right:646px;top:315px;">159</div>
<div class="t" style="left:563px;top:315px;">В брой</div>
<div class="t" style="right:310px;top:315px;">1,50</div>
<div class="t" style="left:720px;top:315px;">Натали</div>
<div class="t" style="left:15px;top:341px;">Общо: 18</div>
<div class="t" style="right:310px;top:341px;">430,49</div>
<div class="a" style="left:902px;top:177px;width:16px;height:177px;background-color:#fff;background-image:linear-gradient(45deg,#D4D0C8 25%,transparent 25%,transparent 75%,#D4D0C8 75%),linear-gradient(45deg,#D4D0C8 25%,transparent 25%,transparent 75%,#D4D0C8 75%);background-size:2px 2px;background-position:0 0,1px 1px"></div>
<div class="a" style="left:902px;top:177px;width:16px;height:16px;background:#D4D0C8;border-top:1px solid #fff;border-left:1px solid #fff;border-right:1px solid #404040;border-bottom:1px solid #404040;box-shadow:inset -1px -1px 0 #808080"></div>
<svg class="a" style="left:906px;top:183px" width="8" height="4" viewBox="0 0 8 4"><path d="M0 4 H7 L3.5 0 Z" fill="#000"/></svg>
<div class="a" style="left:902px;top:338px;width:16px;height:16px;background:#D4D0C8;border-top:1px solid #fff;border-left:1px solid #fff;border-right:1px solid #404040;border-bottom:1px solid #404040;box-shadow:inset -1px -1px 0 #808080"></div>
<svg class="a" style="left:906px;top:344px" width="8" height="4" viewBox="0 0 8 4"><path d="M0 0 H7 L3.5 4 Z" fill="#000"/></svg>
<div class="a" style="left:902px;top:217px;width:16px;height:45px;background:#D4D0C8;border-top:1px solid #fff;border-left:1px solid #fff;border-right:1px solid #404040;border-bottom:1px solid #404040;box-shadow:inset -1px -1px 0 #808080"></div>
<div class="a" style="left:918px;top:177px;width:1px;height:177px;background:#808080"></div>
<div class="a" style="left:927px;top:148px;width:91px;height:25px;background:#D4D0C8;border-top:1px solid #fff;border-left:1px solid #fff;border-right:1px solid #404040;border-bottom:1px solid #404040;box-shadow:inset -1px -1px 0 #808080"></div>
<svg class="a" style="left:931px;top:152px" width="18" height="17" viewBox="0 0 18 17"><path d="M3 8 A6 6 0 0 1 13 4" stroke="#1E5FC8" stroke-width="3" fill="none"/><path d="M11 0 L16 5 L10 7 Z" fill="#1E5FC8"/><path d="M15 10 A6 6 0 0 1 5 14" stroke="#1E5FC8" stroke-width="3" fill="none"/><path d="M7 17 L1 12 L8 10 Z" fill="#1E5FC8"/></svg>
<div class="t" style="left:957px;top:155px;"><u>З</u>арежда</div>
<div class="a" style="left:927px;top:177px;width:91px;height:25px;background:#D4D0C8;border-top:1px solid #fff;border-left:1px solid #fff;border-right:1px solid #404040;border-bottom:1px solid #404040;box-shadow:inset -1px -1px 0 #808080"></div>
<svg class="a" style="left:931px;top:181px" width="18" height="17" viewBox="0 0 18 17"><circle cx="9" cy="8" r="6" fill="none" stroke="#A8A8A8" stroke-width="1.5"/><circle cx="9" cy="8" r="3" fill="none" stroke="#A8A8A8" stroke-width="1.5"/><path d="M1 9 L5 9" stroke="#A8A8A8" stroke-width="1.5"/></svg>
<div class="t" style="left:949px;top:184px;color:#808080;text-shadow:1px 1px 0 #fff">Възстанови</div>
<div class="a" style="left:927px;top:205px;width:91px;height:25px;background:#D4D0C8;border-top:1px solid #fff;border-left:1px solid #fff;border-right:1px solid #404040;border-bottom:1px solid #404040;box-shadow:inset -1px -1px 0 #808080"></div>
<svg class="a" style="left:931px;top:209px" width="18" height="17" viewBox="0 0 18 17"><rect x="4" y="1" width="10" height="5" fill="none" stroke="#A8A8A8"/><rect x="1.5" y="6.5" width="15" height="8" fill="none" stroke="#A8A8A8"/><path d="M4 11 H14" stroke="#A8A8A8"/></svg>
<div class="t" style="left:956px;top:212px;color:#808080;text-shadow:1px 1px 0 #fff">Фиск.бон</div>
<div class="a" style="left:927px;top:233px;width:91px;height:25px;background:#D4D0C8;border-top:1px solid #fff;border-left:1px solid #fff;border-right:1px solid #404040;border-bottom:1px solid #404040;box-shadow:inset -1px -1px 0 #808080"></div>
<svg class="a" style="left:931px;top:237px" width="18" height="17" viewBox="0 0 18 17"><rect x="5" y="1" width="9" height="6" fill="#fff" stroke="#6070A0"/><path d="M1 7 H17 V13 H1 Z" fill="#D8D8E8" stroke="#5060A0"/><rect x="2" y="11" width="14" height="4" fill="#30A050"/><rect x="3" y="12" width="10" height="1" fill="#90E0A0"/></svg>
<div class="t" style="left:963px;top:240px;">Пе<u>ч</u>ат</div>
<div class="a" style="left:927px;top:638px;width:91px;height:25px;background:#D4D0C8;border-top:1px solid #fff;border-left:1px solid #fff;border-right:1px solid #404040;border-bottom:1px solid #404040;box-shadow:inset -1px -1px 0 #808080"></div>
<svg class="a" style="left:931px;top:642px" width="18" height="17" viewBox="0 0 18 17"><rect x="1" y="1" width="15" height="15" fill="#D02828" stroke="#801010"/><path d="M4.5 4.5 L12.5 12.5 M12.5 4.5 L4.5 12.5" stroke="#fff" stroke-width="2"/></svg>
<div class="t" style="left:964px;top:645px;">Изход</div>
<div class="a" style="left:0px;top:354px;width:918px;height:4px;background:#D4D0C8"></div>
<div class="a" style="left:0px;top:358px;width:902px;height:311px;background:#fff;border-top:1px solid #808080;border-left:1px solid #808080"></div>
<div class="a" style="left:1px;top:359px;width:1px;height:310px;background:#fff"></div>
<div class="a" style="left:388px;top:374px;width:1px;height:295px;background:#E4E4E4"></div>
<div class="a" style="left:590px;top:374px;width:1px;height:295px;background:#E4E4E4"></div>
<div class="a" style="left:654px;top:374px;width:1px;height:295px;background:#E4E4E4"></div>
<div class="a" style="left:720px;top:374px;width:1px;height:295px;background:#E4E4E4"></div>
<div class="a" style="left:785px;top:374px;width:1px;height:295px;background:#E4E4E4"></div>
<div class="a" style="left:849px;top:374px;width:1px;height:295px;background:#E4E4E4"></div>
<div class="a" style="left:14px;top:653px;width:836px;height:16px;background:linear-gradient(#FFFEF8,#F8F0DC)"></div>
<div class="a" style="left:13px;top:359px;width:837px;height:15px;background:#fff"></div>
<div class="a" style="left:14px;top:360px;width:374px;height:14px;background:#D4D0C8"></div>
<div class="a" style="left:389px;top:360px;width:201px;height:14px;background:#D4D0C8"></div>
<div class="a" style="left:591px;top:360px;width:63px;height:14px;background:#D4D0C8"></div>
<div class="a" style="left:655px;top:360px;width:65px;height:14px;background:#D4D0C8"></div>
<div class="a" style="left:721px;top:360px;width:64px;height:14px;background:#D4D0C8"></div>
<div class="a" style="left:786px;top:360px;width:64px;height:14px;background:#D4D0C8"></div>
<div class="t" style="left:15px;top:361px;">Артикул</div>
<div class="t" style="left:390px;top:361px;">Обект</div>
<div class="t" style="left:592px;top:361px;">Кол.</div>
<div class="t" style="left:656px;top:361px;">Цена</div>
<div class="t" style="left:722px;top:361px;">Цена дост</div>
<div class="t" style="left:787px;top:361px;">Сума</div>
<div class="a" style="left:14px;top:374px;width:836px;height:15px;background:#BEC2DC"></div>
<div class="a" style="left:720px;top:374px;width:65px;height:15px;background:#808080"></div>
<div class="a" style="left:14px;top:382px;width:836px;height:1px;background:#808080"></div>
<div class="a" style="left:33px;top:375px;width:111px;height:13px;background:#BEC2DC"></div>
<div class="t" style="left:35px;top:376px;letter-spacing:0.22px">05.7.2008 г. 23:06:48</div>
<div class="a" style="left:14px;top:389px;width:836px;height:15px;background:#FFFFFF"></div>
<div class="t" style="left:15px;top:391px;">Ракия Троянска отлежала</div>
<div class="t" style="left:390px;top:391px;">Мокър бюфет механа</div>
<div class="t" style="right:373px;top:391px;">2</div>
<div class="t" style="right:307px;top:391px;">1,50</div>
<div class="t" style="right:242px;top:391px;">0,54</div>
<div class="t" style="right:178px;top:391px;">2,70</div>
<div class="a" style="left:14px;top:404px;width:836px;height:15px;background:#F2F2F2"></div>
<div class="t" style="left:15px;top:406px;">Салата печени чушки</div>
<div class="t" style="left:390px;top:406px;">Студена кухня механа</div>
<div class="t" style="right:373px;top:406px;">1</div>
<div class="t" style="right:307px;top:406px;">3,60</div>
<div class="t" style="right:242px;top:406px;">1,36</div>
<div class="t" style="right:178px;top:406px;">3,24</div>
<div class="a" style="left:14px;top:419px;width:836px;height:15px;background:#FFFFFF"></div>
<div class="t" style="left:15px;top:421px;">Пиле шашлик по град.</div>
<div class="t" style="left:390px;top:421px;">Топла кухня механа</div>
<div class="t" style="right:373px;top:421px;">1</div>
<div class="t" style="right:307px;top:421px;">7,50</div>
<div class="t" style="right:242px;top:421px;">3,04</div>
<div class="t" style="right:178px;top:421px;">6,75</div>
<div class="a" style="left:14px;top:434px;width:836px;height:15px;background:#F2F2F2"></div>
<div class="t" style="left:15px;top:436px;">Салата снежанка</div>
<div class="t" style="left:390px;top:436px;">Студена кухня механа</div>
<div class="t" style="right:373px;top:436px;">1</div>
<div class="t" style="right:307px;top:436px;">3,20</div>
<div class="t" style="right:242px;top:436px;">1,01</div>
<div class="t" style="right:178px;top:436px;">2,88</div>
<div class="a" style="left:14px;top:449px;width:836px;height:15px;background:#FFFFFF"></div>
<div class="t" style="left:15px;top:451px;">Сач Зеленчуци</div>
<div class="t" style="left:390px;top:451px;">Топла кухня механа</div>
<div class="t" style="right:373px;top:451px;">1</div>
<div class="t" style="right:307px;top:451px;">5,00</div>
<div class="t" style="right:242px;top:451px;">2,11</div>
<div class="t" style="right:178px;top:451px;">4,50</div>
<div class="a" style="left:14px;top:464px;width:836px;height:15px;background:#F2F2F2"></div>
<div class="t" style="left:15px;top:466px;">Гъби масло</div>
<div class="t" style="left:390px;top:466px;">Топла кухня механа</div>
<div class="t" style="right:373px;top:466px;">1</div>
<div class="t" style="right:307px;top:466px;">3,20</div>
<div class="t" style="right:242px;top:466px;">1,53</div>
<div class="t" style="right:178px;top:466px;">2,88</div>
<div class="a" style="left:14px;top:479px;width:836px;height:15px;background:#FFFFFF"></div>
<div class="t" style="left:15px;top:481px;">Мин.вода Банкя 1.5</div>
<div class="t" style="left:390px;top:481px;">Мокър бюфет механа</div>
<div class="t" style="right:373px;top:481px;">1</div>
<div class="t" style="right:307px;top:481px;">2,00</div>
<div class="t" style="right:242px;top:481px;">0,48</div>
<div class="t" style="right:178px;top:481px;">1,80</div>
<div class="a" style="left:14px;top:494px;width:836px;height:15px;background:#fff"></div>
<div class="a" style="left:14px;top:502px;width:836px;height:1px;background:#808080"></div>
<div class="a" style="left:33px;top:495px;width:111px;height:13px;background:#fff"></div>
<div class="t" style="left:35px;top:496px;letter-spacing:0.22px">05.7.2008 г. 23:13:45</div>
<div class="a" style="left:14px;top:509px;width:836px;height:15px;background:#FFFFFF"></div>
<div class="t" style="left:15px;top:511px;">Пъстърва на скара</div>
<div class="t" style="left:390px;top:511px;">Топла кухня механа</div>
<div class="t" style="right:373px;top:511px;">3</div>
<div class="t" style="right:307px;top:511px;">2,50</div>
<div class="t" style="right:242px;top:511px;">0,84</div>
<div class="t" style="right:178px;top:511px;">6,75</div>
<div class="a" style="left:14px;top:524px;width:836px;height:15px;background:#fff"></div>
<div class="a" style="left:14px;top:532px;width:836px;height:1px;background:#808080"></div>
<div class="a" style="left:33px;top:525px;width:111px;height:13px;background:#fff"></div>
<div class="t" style="left:35px;top:526px;letter-spacing:0.22px">06.7.2008 г. 00:05:27</div>
<div class="a" style="left:14px;top:539px;width:836px;height:15px;background:#FFFFFF"></div>
<div class="t" style="left:15px;top:541px;">Мляко гърненце</div>
<div class="t" style="left:390px;top:541px;">Студена кухня механа</div>
<div class="t" style="right:373px;top:541px;">1</div>
<div class="t" style="right:307px;top:541px;">3,90</div>
<div class="t" style="right:242px;top:541px;">2,08</div>
<div class="t" style="right:178px;top:541px;">3,51</div>
<div class="a" style="left:388px;top:389px;width:1px;height:280px;background:rgba(200,200,200,0.45)"></div>
<div class="a" style="left:388px;top:374px;width:1px;height:15px;background:rgba(255,255,255,0.5)"></div>
<div class="a" style="left:590px;top:389px;width:1px;height:280px;background:rgba(200,200,200,0.45)"></div>
<div class="a" style="left:590px;top:374px;width:1px;height:15px;background:rgba(255,255,255,0.5)"></div>
<div class="a" style="left:654px;top:389px;width:1px;height:280px;background:rgba(200,200,200,0.45)"></div>
<div class="a" style="left:654px;top:374px;width:1px;height:15px;background:rgba(255,255,255,0.5)"></div>
<div class="a" style="left:720px;top:389px;width:1px;height:280px;background:rgba(200,200,200,0.45)"></div>
<div class="a" style="left:720px;top:374px;width:1px;height:15px;background:rgba(255,255,255,0.5)"></div>
<div class="a" style="left:785px;top:389px;width:1px;height:280px;background:rgba(200,200,200,0.45)"></div>
<div class="a" style="left:785px;top:374px;width:1px;height:15px;background:rgba(255,255,255,0.5)"></div>
<div class="a" style="left:849px;top:389px;width:1px;height:280px;background:rgba(200,200,200,0.45)"></div>
<div class="a" style="left:849px;top:374px;width:1px;height:15px;background:rgba(255,255,255,0.5)"></div>
<div class="t" style="right:179px;top:656px;">35,01</div>
<div class="a" style="left:2px;top:359px;width:11px;height:310px;background:#D4D0C8"></div>
<div class="a" style="left:2px;top:554px;width:10px;height:99px;background:#fff"></div>
<div class="a" style="left:12px;top:359px;width:1px;height:310px;background:#808080"></div>
<div class="a" style="left:13px;top:359px;width:1px;height:310px;background:#fff"></div>
<div class="a" style="left:2px;top:359px;width:10px;height:1px;background:#fff"></div>
<div class="a" style="left:2px;top:374px;width:10px;height:1px;background:#fff"></div>
<div class="a" style="left:2px;top:389px;width:10px;height:1px;background:#fff"></div>
<div class="a" style="left:2px;top:404px;width:10px;height:1px;background:#fff"></div>
<div class="a" style="left:2px;top:419px;width:10px;height:1px;background:#fff"></div>
<div class="a" style="left:2px;top:434px;width:10px;height:1px;background:#fff"></div>
<div class="a" style="left:2px;top:449px;width:10px;height:1px;background:#fff"></div>
<div class="a" style="left:2px;top:464px;width:10px;height:1px;background:#fff"></div>
<div class="a" style="left:2px;top:479px;width:10px;height:1px;background:#fff"></div>
<div class="a" style="left:2px;top:494px;width:10px;height:1px;background:#fff"></div>
<div class="a" style="left:2px;top:509px;width:10px;height:1px;background:#fff"></div>
<div class="a" style="left:2px;top:524px;width:10px;height:1px;background:#fff"></div>
<div class="a" style="left:2px;top:539px;width:10px;height:1px;background:#fff"></div>
<div class="a" style="left:2px;top:653px;width:10px;height:1px;background:#fff"></div>
<svg class="a" style="left:4px;top:376px" width="7" height="12" viewBox="0 0 7 12"><path d="M0 0 L6 5.5 L0 11 Z" fill="#000"/></svg>
<div class="a" style="left:902px;top:358px;width:16px;height:311px;background-color:#fff;background-image:linear-gradient(45deg,#D4D0C8 25%,transparent 25%,transparent 75%,#D4D0C8 75%),linear-gradient(45deg,#D4D0C8 25%,transparent 25%,transparent 75%,#D4D0C8 75%);background-size:2px 2px;background-position:0 0,1px 1px"></div>
<div class="a" style="left:902px;top:358px;width:16px;height:16px;background:#D4D0C8;border-top:1px solid #fff;border-left:1px solid #fff;border-right:1px solid #404040;border-bottom:1px solid #404040;box-shadow:inset -1px -1px 0 #808080"></div>
<svg class="a" style="left:906px;top:364px" width="8" height="4" viewBox="0 0 8 4"><path d="M0 4 H7 L3.5 0 Z" fill="#000"/></svg>
<div class="a" style="left:902px;top:653px;width:16px;height:16px;background:#D4D0C8;border-top:1px solid #fff;border-left:1px solid #fff;border-right:1px solid #404040;border-bottom:1px solid #404040;box-shadow:inset -1px -1px 0 #808080"></div>
<svg class="a" style="left:906px;top:659px" width="8" height="4" viewBox="0 0 8 4"><path d="M0 0 H7 L3.5 4 Z" fill="#000"/></svg>
<div class="a" style="left:902px;top:374px;width:16px;height:146px;background:#D4D0C8;border-top:1px solid #fff;border-left:1px solid #fff;border-right:1px solid #404040;border-bottom:1px solid #404040;box-shadow:inset -1px -1px 0 #808080"></div>
<div class="a" style="left:918px;top:358px;width:1px;height:311px;background:#808080"></div>
<div class="a" style="left:0px;top:670px;width:409px;height:22px;background:#D4D0C8;border-top:1px solid #fff;border-left:1px solid #fff;border-right:1px solid #808080;border-bottom:1px solid #808080"></div>
<div class="a" style="left:2px;top:672px;width:2px;height:18px;background:#fff"></div>
<div class="a" style="left:5px;top:672px;width:1px;height:18px;background:#808080"></div>
<div class="t" style="left:13px;top:676px;">Прозорци:</div>
<svg class="a" style="left:74px;top:675px" width="14" height="13" viewBox="0 0 14 13"><rect x="0.5" y="0.5" width="13" height="12" fill="#fff" stroke="#3050B0"/><rect x="1" y="1" width="13" height="3" fill="#6080D0"/><path d="M1 6.5 H13 M1 9.5 H13 M5.5 4 V12 M9.5 4 V12" stroke="#7090D8"/></svg>
<div class="t" style="left:91px;top:676px;">Справка персонални отчети</div>
<div class="a" style="left:239px;top:672px;width:106px;height:19px;border-top:1px solid #808080;border-left:1px solid #808080;border-right:1px solid #fff;border-bottom:1px solid #fff;background-color:#fff;background-image:linear-gradient(45deg,#D4D0C8 25%,transparent 25%,transparent 75%,#D4D0C8 75%),linear-gradient(45deg,#D4D0C8 25%,transparent 25%,transparent 75%,#D4D0C8 75%);background-size:2px 2px;background-position:0 0,1px 1px"></div>
<svg class="a" style="left:243px;top:675px" width="14" height="13" viewBox="0 0 14 13"><rect x="0.5" y="0.5" width="13" height="12" fill="#fff" stroke="#3050B0"/><rect x="1" y="1" width="13" height="3" fill="#6080D0"/><path d="M1 6.5 H13 M1 9.5 H13 M5.5 4 V12 M9.5 4 V12" stroke="#7090D8"/></svg>
<div class="t" style="left:261px;top:676px;">Справка сметки</div>
<svg class="a" style="left:349px;top:675px" width="13" height="13" viewBox="0 0 13 13"><rect x="0.5" y="0.5" width="12" height="12" fill="#fff" stroke="#3050B0"/><rect x="1" y="1" width="11" height="3" fill="#6080D0"/><path d="M3 6 L9 11" stroke="#404080" stroke-width="1.5"/><circle cx="5" cy="7" r="2" fill="none" stroke="#404080"/></svg>
<div class="t" style="left:366px;top:676px;">Списък</div>
<div class="a" style="left:0px;top:694px;width:459px;height:22px;background:#D4D0C8;border-top:1px solid #fff;border-left:1px solid #fff;border-right:1px solid #808080;border-bottom:1px solid #808080"></div>
<div class="a" style="left:2px;top:696px;width:2px;height:18px;background:#fff"></div>
<div class="a" style="left:5px;top:696px;width:1px;height:18px;background:#808080"></div>
<div class="t" style="left:12px;top:699px;letter-spacing:0.15px">Атквини потребители:</div>
<svg class="a" style="left:139px;top:698px" width="10" height="13" viewBox="0 0 10 13"><circle cx="4.8" cy="4" r="3.2" fill="#C0C4C0" stroke="#404040" stroke-width="1"/><path d="M2 3 Q2 1 4.5 0.8" stroke="#000" stroke-width="1.2" fill="none"/><path d="M1 12 V10 Q1 8 4.8 8 Q8.6 8 8.6 10 V12 Z" fill="#C8C8C8" stroke="#707070" stroke-width="0.8"/><path d="M4.8 8 V12" stroke="#707070" stroke-width=".6"/></svg>
<div class="t" style="left:152px;top:699px;">Неактивен</div>
<svg class="a" style="left:216px;top:698px" width="10" height="13" viewBox="0 0 10 13"><circle cx="4.8" cy="4" r="3.2" fill="#C0C4C0" stroke="#404040" stroke-width="1"/><path d="M2 3 Q2 1 4.5 0.8" stroke="#000" stroke-width="1.2" fill="none"/><path d="M1 12 V10 Q1 8 4.8 8 Q8.6 8 8.6 10 V12 Z" fill="#D83040" stroke="#801020" stroke-width="0.8"/><path d="M4.8 8 V12" stroke="#801020" stroke-width=".6"/></svg>
<div class="t" style="left:230px;top:699px;">ЪнриълСофт</div>
<svg class="a" style="left:305px;top:698px" width="10" height="13" viewBox="0 0 10 13"><circle cx="4.8" cy="4" r="3.2" fill="#C0C4C0" stroke="#404040" stroke-width="1"/><path d="M2 3 Q2 1 4.5 0.8" stroke="#000" stroke-width="1.2" fill="none"/><path d="M1 12 V10 Q1 8 4.8 8 Q8.6 8 8.6 10 V12 Z" fill="#C8C8C8" stroke="#707070" stroke-width="0.8"/><path d="M4.8 8 V12" stroke="#707070" stroke-width=".6"/></svg>
<div class="t" style="left:319px;top:699px;">Неактивен</div>
<svg class="a" style="left:384px;top:698px" width="10" height="13" viewBox="0 0 10 13"><circle cx="4.8" cy="4" r="3.2" fill="#C0C4C0" stroke="#404040" stroke-width="1"/><path d="M2 3 Q2 1 4.5 0.8" stroke="#000" stroke-width="1.2" fill="none"/><path d="M1 12 V10 Q1 8 4.8 8 Q8.6 8 8.6 10 V12 Z" fill="#C8C8C8" stroke="#707070" stroke-width="0.8"/><path d="M4.8 8 V12" stroke="#707070" stroke-width=".6"/></svg>
<div class="t" style="left:397px;top:699px;">Неактивен</div>
<div class="a" style="left:0px;top:718px;width:542px;height:20px;background:#D4D0C8;border-top:1px solid #808080;border-left:1px solid #808080;border-right:1px solid #fff;border-bottom:1px solid #fff"></div>
<div class="a" style="left:544px;top:718px;width:177px;height:20px;background:#D4D0C8;border-top:1px solid #808080;border-left:1px solid #808080;border-right:1px solid #fff;border-bottom:1px solid #fff"></div>
<svg class="a" style="left:551px;top:721px" width="10" height="13" viewBox="0 0 10 13"><circle cx="4.8" cy="4" r="3.2" fill="#C0C4C0" stroke="#404040" stroke-width="1"/><path d="M2 3 Q2 1 4.5 0.8" stroke="#000" stroke-width="1.2" fill="none"/><path d="M1 12 V10 Q1 8 4.8 8 Q8.6 8 8.6 10 V12 Z" fill="#D83040" stroke="#801020" stroke-width="0.8"/><path d="M4.8 8 V12" stroke="#801020" stroke-width=".6"/></svg>
<div class="t" style="left:569px;top:722px;">ЪнриълСофт</div>
<div class="a" style="left:723px;top:718px;width:148px;height:20px;background:#D4D0C8;border-top:1px solid #808080;border-left:1px solid #808080;border-right:1px solid #fff;border-bottom:1px solid #fff"></div>
<svg class="a" style="left:728px;top:720px" width="16" height="17" viewBox="0 0 16 17"><path d="M1 5.5 L6 0.8 L10 4 L5 9 L7 12 Q5 14 3 12 Z" fill="#F4F4F8" stroke="#000" stroke-width="1" stroke-linejoin="round"/><path d="M6 9 L10 4.5 L11 9 L7 12 Z" fill="#E0E0F0"/><path d="M9.5 12 L10 16 L12 14.5 L14 16 L13.5 12 Z" fill="#D02020"/><circle cx="11.8" cy="10.2" r="2.8" fill="#C8E040" stroke="#202020" stroke-width="1"/></svg>
<div class="t" style="left:750px;top:722px;">12.6.2008 г.</div>
<div class="a" style="left:874px;top:718px;width:148px;height:20px;background:#D4D0C8;border-top:1px solid #808080;border-left:1px solid #808080;border-right:1px solid #fff;border-bottom:1px solid #fff"></div>
<svg class="a" style="left:878px;top:720px" width="17" height="16" viewBox="0 0 17 16"><path d="M8.5 4 L4 11 M8.5 4 L13 11 M4 11 H13" stroke="#202020" stroke-width="1"/><circle cx="8.5" cy="4" r="3.2" fill="#80C0F0" stroke="#5080B0" stroke-width=".8"/><circle cx="4" cy="11.5" r="3.2" fill="#80C0F0" stroke="#5080B0" stroke-width=".8"/><circle cx="13" cy="11.5" r="3.2" fill="#80C0F0" stroke="#5080B0" stroke-width=".8"/><circle cx="7.8" cy="3.2" r="1.2" fill="#D8F0FF"/><circle cx="3.3" cy="10.7" r="1.2" fill="#D8F0FF"/><circle cx="12.3" cy="10.7" r="1.2" fill="#D8F0FF"/></svg>
<div class="t" style="left:900px;top:722px;">localhost</div>
<div class="a" style="left:0px;top:738px;width:1024px;height:30px;background:#D4D0C8"></div>
<div class="a" style="left:0px;top:739px;width:1024px;height:1px;background:#fff"></div>
<div class="a" style="left:2px;top:742px;width:52px;height:22px;background:#D4D0C8;border-top:1px solid #fff;border-left:1px solid #fff;border-right:1px solid #404040;border-bottom:1px solid #404040;box-shadow:inset -1px -1px 0 #808080"></div>
<svg class="a" style="left:4px;top:745px" width="16" height="14" viewBox="0 0 16 14"><path d="M3 1 Q5.5 0 8 1.5 L7.2 6.5 Q4.7 5 2.2 6 Z" fill="#F06030"/><path d="M8.7 1.6 Q11.2 3 15 1.8 L14.2 6.8 Q10.7 8 8 6.6 Z" fill="#50C040"/><path d="M2 7 Q4.5 6 7 7.4 L6.2 12.4 Q3.7 11 1.2 12 Z" fill="#3080F0"/><path d="M7.8 7.6 Q10.5 9 14 7.8 L13.2 12.8 Q10 14 7 12.6 Z" fill="#F8D030"/></svg>
<div class="t" style="left:22px;top:747px;font-weight:bold;font-size:11px;letter-spacing:0.9px">Start</div>
<div class="a" style="left:61px;top:743px;width:2px;height:20px;background:#fff"></div>
<div class="a" style="left:63px;top:743px;width:1px;height:20px;background:#808080"></div>
<svg class="a" style="left:70px;top:744px" width="18" height="18" viewBox="0 0 18 18"><path d="M2 3 L14 1 L16 13 L4 16 Z" fill="#2868C8" stroke="#103070"/><path d="M11 4 Q5 3 5 9 Q5 14 12 12" stroke="#fff" stroke-width="2" fill="none"/><path d="M8 9 L13 7" stroke="#fff" stroke-width="1.5"/><circle cx="14" cy="6" r="2" fill="#E06020"/></svg>
<svg class="a" style="left:93px;top:745px" width="18" height="17" viewBox="0 0 18 17"><circle cx="9" cy="9" r="6.5" fill="#2A8AE8"/><circle cx="9" cy="8.5" r="3.5" fill="#fff"/><rect x="5" y="8" width="8" height="1.8" fill="#2A8AE8"/><path d="M9 10 H14 V12 H9 Z" fill="#2A8AE8"/><path d="M2 12 Q-1 17 5 14 M13 2 Q18 -1 15 5" stroke="#60B0F0" stroke-width="1.5" fill="none"/></svg>
<svg class="a" style="left:117px;top:745px" width="17" height="17" viewBox="0 0 17 17"><defs><linearGradient id="ag3" x1="0" y1="0" x2="0.25" y2="1"><stop offset="0" stop-color="#FFF8C8"/><stop offset="0.35" stop-color="#D8B050"/><stop offset="0.6" stop-color="#A07828"/><stop offset="0.8" stop-color="#F0C8A0"/><stop offset="1" stop-color="#FFF0F0"/></linearGradient></defs><path d="M6 11.5 H10 V15 H6 Z" fill="#FFF4F0"/><path d="M1.5 7 L7.5 1.5 L10.5 1.5 L15.5 6.5 L10.5 11.5 L5 12 Q0 11.5 0.8 9.5 Z" fill="url(#ag3)" stroke="#000" stroke-width="1"/><path d="M3 8.5 Q8 6 13 7.5" stroke="#806018" stroke-width="1" fill="none"/><path d="M11.5 3 L14 0 M13.5 5 L16 2" stroke="#000" stroke-width="1"/><path d="M6.5 12 V15 M9.5 12 V15 M5 15.5 H12" stroke="#000" stroke-width="1"/></svg>
<div class="a" style="left:143px;top:743px;width:1px;height:20px;background:#808080"></div>
<div class="a" style="left:144px;top:743px;width:1px;height:20px;background:#fff"></div>
<div class="a" style="left:150px;top:742px;width:160px;height:22px;background:#D4D0C8;border-top:1px solid #fff;border-left:1px solid #fff;border-right:1px solid #404040;border-bottom:1px solid #404040;box-shadow:inset -1px -1px 0 #808080"></div>
<svg class="a" style="left:153px;top:744px" width="17" height="16" viewBox="0 0 17 16"><path d="M1.5 4 L9 1.5 L15 3 V13 L7.5 15.5 L1.5 13.5 Z" fill="#B8B8D8" stroke="#8888A8" stroke-width=".8"/><path d="M1.5 4 L7.5 5.5 L15 3 M7.5 5.5 V15.5" stroke="#F0F0FF" stroke-width="1" fill="none"/><path d="M7.5 5.5 L15 3 V13 L7.5 15.5 Z" fill="#9090B8"/></svg>
<div class="t" style="left:173px;top:746px;">Manage Your Server</div>
<div class="a" style="left:313px;top:742px;width:159px;height:22px;background:#D4D0C8;border-top:1px solid #fff;border-left:1px solid #fff;border-right:1px solid #404040;border-bottom:1px solid #404040;box-shadow:inset -1px -1px 0 #808080"></div>
<svg class="a" style="left:316px;top:744px" width="17" height="16" viewBox="0 0 17 16"><path d="M1 3 L6 1 L11 4 L9 5 L5 3.5 L4 4" fill="#C0C0C8" stroke="#404040" stroke-width=".8"/><path d="M5 4 V15" stroke="#303030" stroke-width="1.5"/><rect x="3" y="9" width="4" height="6" fill="#F0D020" stroke="#806000" stroke-width=".6"/><rect x="8.5" y="8.5" width="7" height="7" fill="#E8D0F0" stroke="#602060" stroke-width=".8"/><path d="M10.5 10 V14 M13 10 V14" stroke="#802040"/></svg>
<div class="t" style="left:336px;top:746px;">File Server Management</div>
<div class="a" style="left:475px;top:742px;width:161px;height:22px;border-top:1px solid #404040;border-left:1px solid #404040;border-right:1px solid #fff;border-bottom:1px solid #fff;box-shadow:inset 1px 1px 0 #808080;background-color:#fff;background-image:linear-gradient(45deg,#D4D0C8 25%,transparent 25%,transparent 75%,#D4D0C8 75%),linear-gradient(45deg,#D4D0C8 25%,transparent 25%,transparent 75%,#D4D0C8 75%);background-size:2px 2px;background-position:0 0,1px 1px"></div>
<svg class="a" style="left:479px;top:745px" width="17" height="16" viewBox="0 0 17 16"><defs><linearGradient id="ag4" x1="0" y1="0" x2="0.25" y2="1"><stop offset="0" stop-color="#FFF8C8"/><stop offset="0.35" stop-color="#D8B050"/><stop offset="0.6" stop-color="#A07828"/><stop offset="0.8" stop-color="#F0C8A0"/><stop offset="1" stop-color="#FFF0F0"/></linearGradient></defs><path d="M6 11.5 H10 V15 H6 Z" fill="#FFF4F0"/><path d="M1.5 7 L7.5 1.5 L10.5 1.5 L15.5 6.5 L10.5 11.5 L5 12 Q0 11.5 0.8 9.5 Z" fill="url(#ag4)" stroke="#000" stroke-width="1"/><path d="M3 8.5 Q8 6 13 7.5" stroke="#806018" stroke-width="1" fill="none"/><path d="M11.5 3 L14 0 M13.5 5 L16 2" stroke="#000" stroke-width="1"/><path d="M6.5 12 V15 M9.5 12 V15 M5 15.5 H12" stroke="#000" stroke-width="1"/></svg>
<div class="t" style="left:501px;top:747px;font-weight:bold;letter-spacing:0.4px">TouchSale</div>
<div class="a" style="left:639px;top:742px;width:159px;height:22px;background:#D4D0C8;border-top:1px solid #fff;border-left:1px solid #fff;border-right:1px solid #404040;border-bottom:1px solid #404040;box-shadow:inset -1px -1px 0 #808080"></div>
<svg class="a" style="left:642px;top:744px" width="17" height="16" viewBox="0 0 17 16"><rect x="2.5" y="0.5" width="11" height="15" rx="1" fill="#A8B8D8" stroke="#506090"/><rect x="4" y="2" width="8" height="3" fill="#E8F4E0" stroke="#607090" stroke-width=".5"/><path d="M4.5 7.5 H6 M7.5 7.5 H9 M10.5 7.5 H12 M4.5 10 H6 M7.5 10 H9 M10.5 10 H12 M4.5 12.5 H6 M7.5 12.5 H9 M10.5 12.5 H12" stroke="#F0F4FF" stroke-width="1.5"/></svg>
<div class="t" style="left:662px;top:746px;">Calculator</div>
<div class="a" style="left:886px;top:744px;width:1px;height:19px;background:#fff"></div>
<div class="a" style="left:887px;top:744px;width:1px;height:19px;background:#808080"></div>
<div class="a" style="left:897px;top:746px;width:16px;height:16px;background:#0A2060"></div>
<div class="t" style="left:895px;width:20px;text-align:center;top:748px;color:#fff;font-size:11px">BG</div>
<div class="a" style="left:917px;top:744px;width:1px;height:19px;background:#808080"></div>
<div class="a" style="left:918px;top:744px;width:1px;height:19px;background:#fff"></div>
<div class="a" style="left:924px;top:742px;width:97px;height:23px;background:#D4D0C8;border-top:1px solid #808080;border-left:1px solid #808080;border-right:1px solid #fff;border-bottom:1px solid #fff"></div>
<svg class="a" style="left:926px;top:745px" width="16" height="16" viewBox="0 0 16 16"><rect x="6.5" y="1.5" width="8" height="8" fill="#3848A0" stroke="#182060"/><rect x="8" y="3" width="5" height="5" fill="#8898E0"/><rect x="1.5" y="5.5" width="8" height="8" fill="#3848A0" stroke="#182060"/><rect x="3" y="7" width="5" height="5" fill="#98A8F0"/><path d="M2 14.5 H10" stroke="#C0C8E0" stroke-width="1.5"/></svg>
<svg class="a" style="left:946px;top:745px" width="16" height="16" viewBox="0 0 16 16"><path d="M8 3.5 L3.5 12 H12.5 Z" fill="none" stroke="#208020" stroke-width="1"/><circle cx="8" cy="3.5" r="2.6" fill="#40D040"/><circle cx="3.5" cy="12" r="2.6" fill="#40D040"/><circle cx="12.5" cy="12" r="2.6" fill="#40D040"/></svg>
<div class="a" style="left:963px;top:746px;width:16px;height:16px;background:#000"></div>
<svg class="a" style="left:963px;top:746px" width="16" height="16" viewBox="0 0 16 16"><path d="M2 2 L5 13 L8 2" stroke="#30C030" stroke-width="2" fill="none"/><path d="M10 6 Q10 3 12 3 Q14 3 14 6 V8" stroke="#6080F0" fill="none"/><path d="M14 10 Q10 9 10 12 Q10 15 14 14" stroke="#F03030" fill="none"/></svg>
<div class="t" style="left:986px;top:748px;">11:05</div>
</body></html>
